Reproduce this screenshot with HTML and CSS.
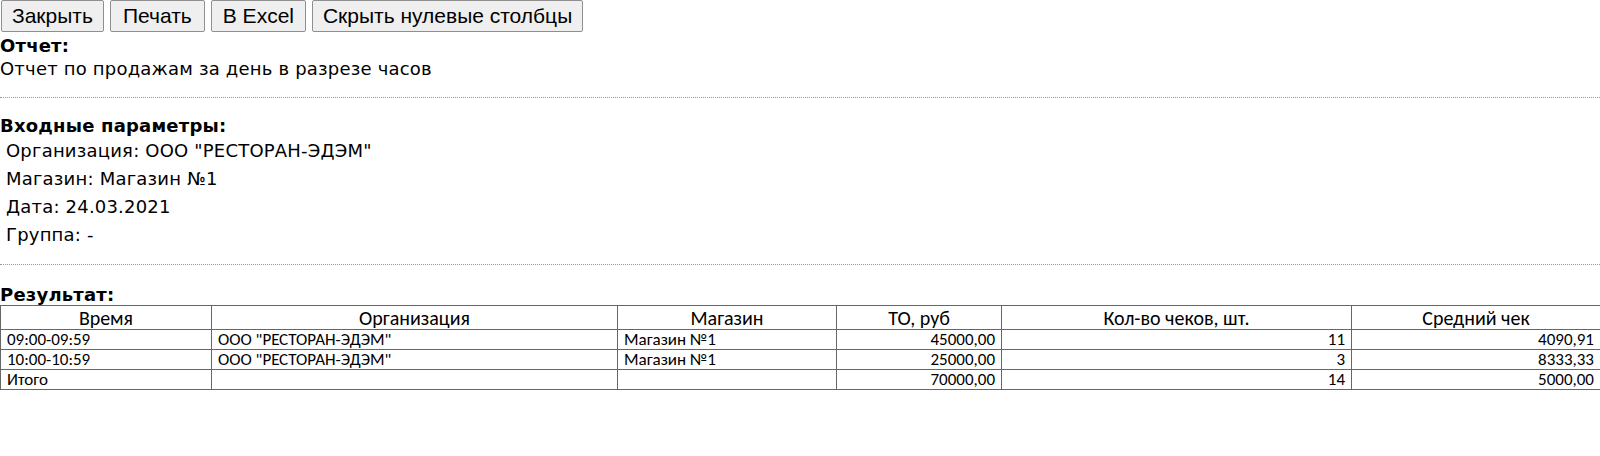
FILE: index.html
```html
<!DOCTYPE html>
<html lang="ru">
<head>
    <meta charset="UTF-8">
    <title>Отчет</title>
    <link rel="stylesheet" href="styles.css">
</head>
<body>
    <div class="toolbar">
        <button class="btn">Закрыть</button>
        <button class="btn">Печать</button>
        <button class="btn">В Excel</button>
        <button class="btn">Скрыть нулевые столбцы</button>
    </div>

    <div class="report">
        <div class="caption">Отчет:</div>
        <div class="report-name">Отчет по продажам за день в разрезе часов</div>
    </div>

    <div class="section params">
        <div class="caption">Входные параметры:</div>
        <div class="param">Организация: ООО "РЕСТОРАН-ЭДЭМ"</div>
        <div class="param">Магазин: Магазин №1</div>
        <div class="param">Дата: 24.03.2021</div>
        <div class="param">Группа: -</div>
    </div>

    <div class="section result">
        <div class="caption">Результат:</div>
        <table class="grid">
            <colgroup>
                <col class="c-time">
                <col class="c-org">
                <col class="c-shop">
                <col class="c-sum">
                <col class="c-cnt">
                <col class="c-avg">
            </colgroup>
            <thead>
                <tr>
                    <th>Время</th>
                    <th>Организация</th>
                    <th>Магазин</th>
                    <th>ТО, руб</th>
                    <th>Кол-во чеков, шт.</th>
                    <th>Средний чек</th>
                </tr>
            </thead>
            <tbody>
                <tr>
                    <td>09:00-09:59</td>
                    <td>ООО "РЕСТОРАН-ЭДЭМ"</td>
                    <td>Магазин №1</td>
                    <td class="num">45000,00</td>
                    <td class="num">11</td>
                    <td class="num">4090,91</td>
                </tr>
                <tr>
                    <td>10:00-10:59</td>
                    <td>ООО "РЕСТОРАН-ЭДЭМ"</td>
                    <td>Магазин №1</td>
                    <td class="num">25000,00</td>
                    <td class="num">3</td>
                    <td class="num">8333,33</td>
                </tr>
                <tr>
                    <td>Итого</td>
                    <td></td>
                    <td></td>
                    <td class="num">70000,00</td>
                    <td class="num">14</td>
                    <td class="num">5000,00</td>
                </tr>
            </tbody>
        </table>
    </div>
</body>
</html>
```

FILE: styles.css
```css
body{
    margin: 0;
    font-family: Verdana, "DejaVu Sans", sans-serif;
    font-size: 18px;
    letter-spacing: 0.2px;
    color: #000;
    background: #fff;
}
.toolbar{
    display: flex;
    gap: 6px;
    padding-left: 1px;
    height: 34px;
}
.btn{
    font-family: Arial, "Liberation Sans", sans-serif;
    font-size: 21px;
    letter-spacing: 0;
    min-width: 95px;
    height: 32px;
    padding: 0 10px;
    color: #000;
    background: #efefef;
    border: 1px solid #8f8f8f;
    border-radius: 2px;
}
.caption{
    font-weight: bold;
    line-height: 23px;
}
.report-name{
    line-height: 24px;
    padding-bottom: 16px;
}
.section{
    border-top: 1px dotted #999;
}
.params{
    padding-top: 17px;
    padding-bottom: 15px;
}
.params .caption{
    line-height: 22px;
}
.param{
    line-height: 28px;
    padding-left: 6px;
}
.result{
    padding-top: 20px;
}
.result .caption{
    line-height: 20px;
}
.grid{
    width: 100%;
    border-collapse: collapse;
    table-layout: fixed;
    letter-spacing: 0;
    font-family: Calibri, Carlito, "Liberation Sans Narrow", "DejaVu Sans Condensed", sans-serif;
}
.grid th, .grid td{
    border: 1px solid #666;
    padding: 0 6px;
    white-space: nowrap;
}
.grid th{
    font-size: 20px;
    font-weight: normal;
    line-height: 22px;
    height: 23px;
    text-align: center;
}
.grid td{
    font-size: 17px;
    line-height: 18px;
    height: 19px;
}
.grid td.num{
    text-align: right;
}
.c-time{ width: 211px; }
.c-org{ width: 406px; }
.c-shop{ width: 219px; }
.c-sum{ width: 165px; }
.c-cnt{ width: 350px; }
.c-avg{ width: 249px; }
```
